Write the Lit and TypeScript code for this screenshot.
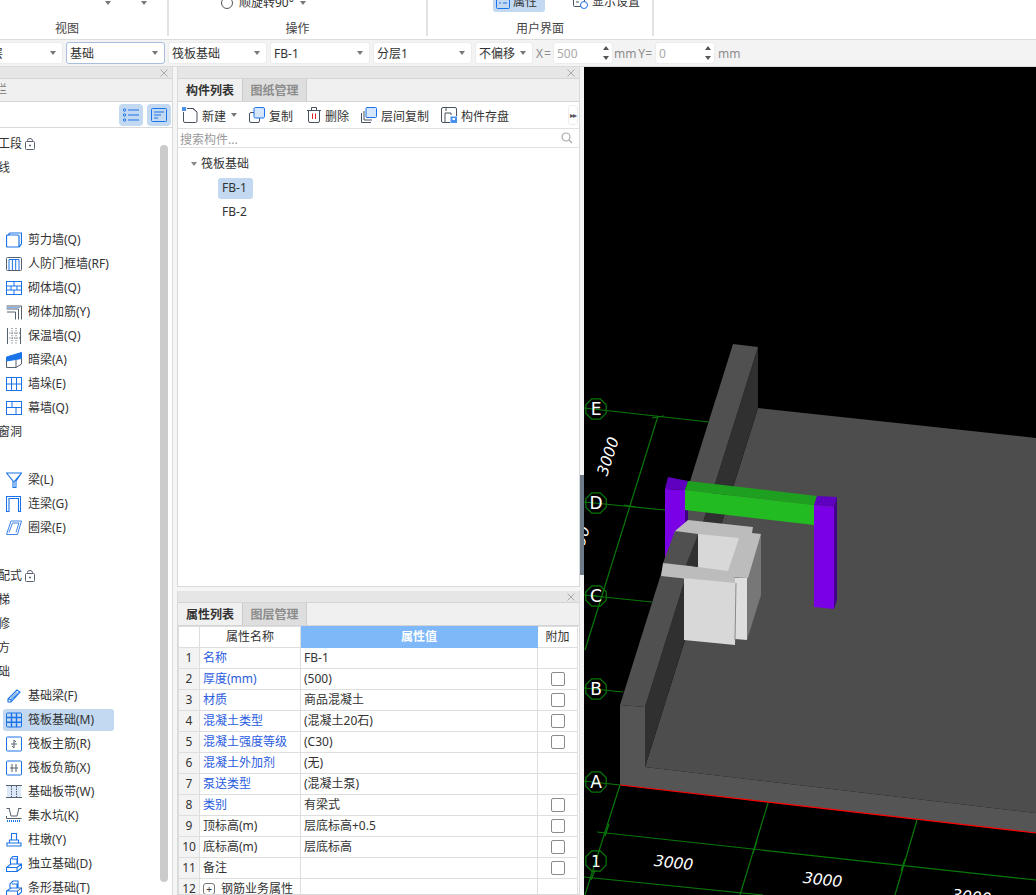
import { LitElement, html, css, svg } from "lit";
import { customElement } from "lit/decorators.js";

const B = "#1a73e8";
const D = "#56606e";
const ic = (body: unknown, w = 16, h = 16) =>
  html`<svg class="ico" width=${w} height=${h} viewBox="0 0 16 16" fill="none" stroke=${B} stroke-width="1">${body}</svg>`;

const icons: Record<string, unknown> = {
  shear: ic(svg`<rect x=".5" y="3" width="12.5" height="12" rx="1" stroke-width="1.2"/><path d="M2 3 4 1H15.5V12L13 15" stroke-width="1.2"/>`),
  door: ic(svg`<rect x=".5" y="1.5" width="15" height="13" rx="1" stroke=${D}/><path d="M3 3.5H13V14M3 3.5V14M6.4 3.5V14M9.7 3.5V14" stroke=${B}/>`),
  brick: ic(svg`<rect x=".5" y="1.5" width="15" height="13"/><path d="M.5 6H15.5M.5 10H15.5M8 1.5V6M5 6V10M11 6V10M8 10V14.5"/>`),
  rebar: ic(svg`<path d="M.5 2H15.5V15.5M.5 5H12.5V15.5" stroke=${D}/><path d="M1 8H9.5V15.5" stroke=${D}/><path d="M.5 3.5H14" stroke=${B} stroke-opacity=".55"/>`),
  insul: ic(svg`<path d="M1.5 0V16M14.5 0V16" stroke=${D}/><path d="M6 0V16M10 0V16M1 5H15M1 10H15" stroke=${D} stroke-dasharray="1 1.4"/>`),
  hidden: ic(svg`<path d="M.5 5 15.5 .5V6.5L.5 9Z" fill=${B} stroke=${B}/><path d="M.5 9V15.5H10L15.5 12V6.5M10 8V15.5" stroke=${D}/>`),
  pier: ic(svg`<rect x=".5" y="1.5" width="15" height="13"/><path d="M.5 8H15.5M5.5 1.5V14.5M10.5 1.5V14.5"/>`),
  curtain: ic(svg`<rect x=".5" y="1.5" width="15" height="13"/><path d="M.5 7.5H15.5M6 1.5V7.5M10 7.5V14.5"/>`),
  beam: ic(svg`<path d="M.5 1H15.5L10 9V15.5H7V9ZM15.5 1 7 11" stroke="#1a73e8" stroke-width="1.1"/><path d="M8.5 10V15" stroke="#8dbbf2" stroke-width="2"/>`),
  lintel: ic(svg`<path d="M.5 15.5V.5H14.5V15.5H12.5V2.5H3V15.5Z" stroke-width="1.1"/>`),
  ring: ic(svg`<path d="M.5 14.5 5 1H15.5L11.5 14.5ZM3 12.5 6.5 3H13L10 12.5" stroke="#3d85e8"/>`),
  fbeam: ic(svg`<path d="M2 11 11 2 14 4 5 14 2 14ZM2 11 5 11.5 5 14M5 11.5 14 4" stroke-width="1.1"/><path d="M5 10.5 11.5 4.5" stroke="#8dbbf2" stroke-width="2"/>`),
  raft: ic(svg`<rect x=".5" y="1" width="15" height="14" rx="1"/><path d="M.5 5.5H15.5M.5 10.3H15.5M5.5 1V15M10.5 1V15" stroke-width="1.4"/>`),
  main: ic(svg`<rect x=".5" y="1" width="15" height="14" rx="1"/><path d="M8 4V12M5 8H11M8 4 10 6M8 12 6 10" stroke=${D}/>`),
  neg: ic(svg`<rect x=".5" y="1" width="15" height="14" rx="1"/><path d="M6 4V12M10 4V12M4 8H12" stroke=${D}/>`),
  strip: ic(svg`<rect x="1" y="2" width="14" height="12" fill="#dbe9fa" stroke="none"/><path d="M0 1.5H16M0 13.5H16" stroke=${D}/><path d="M5.5 2V13M10.5 2V13" stroke=${D} stroke-dasharray="1.5 1"/>`),
  pit: ic(svg`<path d="M3 0 5 8H11L13 0M.5 .5H3.5M12.5 .5H15.5M.5 8 .5 10.5H15.5" stroke=${D}/><path d="M1 13H15" stroke=${B} stroke-width="2" stroke-dasharray="1 1"/>`),
  cap: ic(svg`<path d="M5.5 1.5H10.5V8H5.5ZM3.5 8H12.5V11H3.5ZM1 11H15V14H1Z" stroke-width="1.1"/>`),
  iso: ic(svg`<path d="M.5 15.5V11.5L5 8H15.5V12L11 15.5ZM.5 11.5H11V15.5M11 11.5 15.5 8M4.5 8V3L7 .5H11.5V8M6 3H11V8" stroke-width="1.1"/>`),
  bar: ic(svg`<path d="M.5 15.5V11L5 8H15.5V12L11.5 15.5ZM.5 11H11.5V15.5M4 8V4L7 1H12V8M6 4H11V8" stroke-width="1.1"/><path d="M11.5 11 15.5 8" stroke=${D}/>`),
};

const tree: Array<{ t: string; i?: string; lock?: boolean; on?: boolean }> = [
  { t: "施工段", lock: true }, { t: "轴线" }, { t: "柱" }, { t: "墙" },
  { t: "剪力墙(Q)", i: "shear" }, { t: "人防门框墙(RF)", i: "door" }, { t: "砌体墙(Q)", i: "brick" },
  { t: "砌体加筋(Y)", i: "rebar" }, { t: "保温墙(Q)", i: "insul" }, { t: "暗梁(A)", i: "hidden" },
  { t: "墙垛(E)", i: "pier" }, { t: "幕墙(Q)", i: "curtain" }, { t: "门窗洞" }, { t: "梁" },
  { t: "梁(L)", i: "beam" }, { t: "连梁(G)", i: "lintel" }, { t: "圈梁(E)", i: "ring" }, { t: "板" },
  { t: "装配式", lock: true }, { t: "楼梯" }, { t: "装修" }, { t: "土方" }, { t: "基础" },
  { t: "基础梁(F)", i: "fbeam" }, { t: "筏板基础(M)", i: "raft", on: true }, { t: "筏板主筋(R)", i: "main" },
  { t: "筏板负筋(X)", i: "neg" }, { t: "基础板带(W)", i: "strip" }, { t: "集水坑(K)", i: "pit" },
  { t: "柱墩(Y)", i: "cap" }, { t: "独立基础(D)", i: "iso" }, { t: "条形基础(T)", i: "bar" },
];

const rows: Array<[string, string, boolean, boolean]> = [
  ["名称", "FB-1", true, false], ["厚度(mm)", "(500)", true, true], ["材质", "商品混凝土", true, true],
  ["混凝土类型", "(混凝土20石)", true, true], ["混凝土强度等级", "(C30)", true, true], ["混凝土外加剂", "(无)", true, false],
  ["泵送类型", "(混凝土泵)", true, false], ["类别", "有梁式", true, true], ["顶标高(m)", "层底标高+0.5", false, true],
  ["底标高(m)", "层底标高", false, true], ["备注", "", false, true],
];

const lock = html`<svg class="lock" width="10" height="12" viewBox="0 0 10 12" fill="none" stroke="#56606e"><rect x=".5" y="3.5" width="9" height="8" rx="1"/><path d="M2.5 3.5V2.5a2.5 2 0 0 1 5 0v1"/><circle cx="5" cy="7.5" r="1" fill="#56606e" stroke="none"/></svg>`;

const close = html`<svg width="8" height="8" viewBox="0 0 8 8" stroke="#aaa" stroke-width="1"><path d="M.5.5 7.5 7.5M7.5.5.5 7.5"/></svg>`;

const tbIcons = {
  add: html`<svg width="16" height="16" viewBox="0 0 16 16" fill="none" stroke="#4a5260"><path d="M5 1.5H11L15 5V14a1.5 1.5 0 0 1-1.5 1.5H3A1.5 1.5 0 0 1 1.5 14V5"/><path d="M11 1.5 15 5"/><rect x="0" y="0" width="4" height="4" fill="#4a90ee" stroke="none"/></svg>`,
  copy: html`<svg width="16" height="16" viewBox="0 0 16 16" fill="none"><path d="M5 5.5H2A1.5 1.5 0 0 0 .5 7V14A1.5 1.5 0 0 0 2 15.5H9A1.5 1.5 0 0 0 10.5 14V11" stroke="#4a5260"/><rect x="5" y=".5" width="10.5" height="10.5" rx="1.5" fill="#d5e6fb" stroke="#1a73e8"/></svg>`,
  del: html`<svg width="14" height="16" viewBox="0 0 14 16" fill="none" stroke="#4a5260"><path d="M1.5 3.5V14a1.5 1.5 0 0 0 1.5 1.5H11a1.5 1.5 0 0 0 1.5-1.5V3.5M0 3.5H14M4.5 3V.5H9.5V3"/><path d="M5.5 6.5V12M8.5 6.5V12" stroke="#e02020"/></svg>`,
  floor: html`<svg width="16" height="16" viewBox="0 0 16 16" fill="none"><path d="M.5 6V15.5H10M3 4V13H11" stroke="#4a5260"/><rect x="5" y=".5" width="10.5" height="10" rx="1" fill="#d5e6fb" stroke="#1a73e8"/></svg>`,
  save: html`<svg width="16" height="16" viewBox="0 0 16 16" fill="none"><path d="M9 15.5H2a1.5 1.5 0 0 1-1.5-1.5V2A1.5 1.5 0 0 1 2 .5H14A1.5 1.5 0 0 1 15.5 2V9M4 15V6H10V8M5 1V4" stroke="#4a5260"/><rect x="9.5" y="9.5" width="6.5" height="6.5" fill="#4a90ee"/><rect x="11.5" y="11" width="2.5" height="2" fill="#fff"/></svg>`,
};

function octagon(cx: number, cy: number, r: number) {
  const p: string[] = [];
  for (let i = 0; i < 8; i++) {
    const a = Math.PI / 8 + (i * Math.PI) / 4;
    p.push(`${(cx + r * Math.cos(a)).toFixed(1)},${(cy + r * Math.sin(a)).toFixed(1)}`);
  }
  return p.join(" ");
}

const tick = (x: number, y: number, dx: number, dy: number) =>
  svg`<path d="M${x - dx} ${y - dy}L${x + dx} ${y + dy}"/>`;

@customElement("app-root")
export class AppRoot extends LitElement {
  static styles = css`
    :host { display: block; width: 1036px; height: 895px; overflow: hidden; background: #f5f5f5;
      font: 12px/16px "Noto Sans", "Noto Sans CJK SC", sans-serif; color: #333; }
    .ribbon { height: 40px; background: #fff; display: flex; overflow: hidden; border-bottom: 1px solid #dcdcdc; box-sizing: border-box; }
    .grp { border-right: 2px solid #e2e2e2; height: 36px; box-sizing: border-box; display: flex; flex-direction: column; align-items: center; }
    .grp .top { height: 21px; display: flex; align-items: center; width: 100%; position: relative; flex: none; box-sizing: border-box; }
    .grp .lbl { line-height: 16px; color: #444; }
    .g1 { width: 169px; } .g2 { width: 259px; } .g3 { width: 226px; }
    .caret { width: 0; height: 0; border: 3px solid transparent; border-top: 4px solid #777; border-bottom: 0; flex: none; }
    .g1 .top { padding-left: 105px; gap: 30px; margin-top: -8px; }
    .g1 .lbl { margin-top: 8px; margin-right: 33px; }
    .g2 .top { padding-left: 52px; margin-top: -8px; }
    .g2 .lbl { margin-top: 8px; }
    .radio { width: 10px; height: 10px; border: 1px solid #555; border-radius: 50%; flex: none; margin-right: 6px; }
    .g2 .caret { margin-left: 6px; }
    .g3 .top { padding-left: 65px; margin-top: -9px; }
    .g3 .lbl { margin-top: 9px; }
    .prop { display: flex; align-items: center; gap: 3px; background: #c2d9f1; border-radius: 3px; height: 21px; width: 52px; padding: 0 3px; box-sizing: border-box; flex: none; }
    .disp { display: flex; align-items: center; gap: 4px; margin-left: 28px; flex: none; }
    .bar { height: 27px; display: flex; align-items: center; background: #f3f3f3; border-bottom: 1px solid #dcdcdc; box-sizing: border-box; margin-left: -37px; gap: 3px; }
    .sel { height: 22px; background: #fff; border: 1px solid #ececec; border-radius: 3px; box-sizing: border-box; display: flex; align-items: center; justify-content: space-between; padding: 0 6px 0 3px; flex: none; }
    .sel.on { border-color: #a9bde0; }
    .txt { padding-top: 2px; }
    .num { height: 22px; background: #fff; border: 1px solid #ececec; border-radius: 3px; box-sizing: border-box; display: flex; align-items: center; justify-content: space-between; padding: 0 3px; flex: none; color: #aaa; width: 60px; }
    .spin { display: flex; flex-direction: column; gap: 6px; }
    .up { width: 0; height: 0; border: 3px solid transparent; border-bottom: 4px solid #555; border-top: 0; }
    .dn { width: 0; height: 0; border: 3px solid transparent; border-top: 4px solid #555; border-bottom: 0; }
    .unit { color: #8b8b8b; flex: none; padding-top: 2px; }
    .unit.x { letter-spacing: 1px; margin-right: -2px; }
    .unit.m1 { margin-left: -2px; }
    .unit.y { margin-left: -1px; }
    .main { display: flex; height: 828px; }
    .left { width: 173px; flex: none; background: #fff; display: flex; flex-direction: column; overflow: hidden; border-right: 1px solid #d9d9d9; box-sizing: border-box; }
    .title { height: 11px; flex: none; background: #e6e6e6; border-bottom: 1px solid #d4d4d4; display: flex; justify-content: flex-end; align-items: center; padding-right: 4px; }
    .tabs { height: 22px; flex: none; background: #f0f0f0; border-bottom: 1px solid #d4d4d4; display: flex; align-items: stretch; font-weight: 700; }
    .tab { width: 64px; display: flex; align-items: center; justify-content: center; color: #333; padding-top: 2px; box-sizing: border-box; }
    .tab.off { width: 65px; background: #dedede; color: #8c8c8c; border-left: 1px solid #ccc; border-right: 1px solid #ccc; }
    .navt { margin-left: -29px; align-items: center; display: flex; color: #777; font-weight: 400; }
    .ltools { height: 26px; flex: none; border-bottom: 1px solid #d9d9d9; display: flex; justify-content: flex-end; align-items: center; gap: 4px; padding-right: 1px; box-sizing: border-box; }
    .ltools span { width: 24px; height: 22px; border-radius: 4px; background: #c2d9f1; display: flex; align-items: center; justify-content: center; }
    .lbody { flex: 1; display: flex; min-height: 0; }
    .tree { flex: 1; padding-top: 4px; min-width: 0; overflow: hidden; display: flex; flex-direction: column; }
    .row { height: 24px; flex: none; display: flex; align-items: center; white-space: nowrap; }
    .row.group { margin-left: -14px; gap: 3px; }
    .row.item { margin: 1px 0 1px 3px; padding-left: 3px; width: 111px; height: 22px; box-sizing: border-box; border-radius: 3px; gap: 6px; }
    .row.active { background: #c2d9f1; }
    .ico { flex: none; display: block; }
    .lock { flex: none; }
    .track { width: 12px; flex: none; }
    .thumb { width: 8px; height: 737px; margin-top: 17px; background: #cbcbcb; border-radius: 4px; }
    .mid { width: 403px; margin-left: 4px; flex: none; display: flex; flex-direction: column; gap: 4px; }
    .panel { background: #fff; border: 1px solid #d9d9d9; border-top: 0; display: flex; flex-direction: column; box-sizing: border-box; overflow: hidden; }
    .p1 { height: 520px; flex: none; }
    .p2 { flex: 1; min-height: 0; }
    .mtools { height: 27px; flex: none; border-bottom: 1px solid #e0e0e0; display: flex; align-items: center; padding-left: 4px; position: relative; box-sizing: border-box; }
    .tb { display: flex; align-items: center; gap: 4px; flex: none; }
    .tb svg { display: block; }
    .tb span { padding-top: 3px; }
    .more { position: absolute; right: 1px; top: 3px; width: 10px; height: 20px; border: 1px solid #eee; border-radius: 3px; box-sizing: border-box; display: flex; align-items: center; justify-content: center; font-size: 8px; color: #555; letter-spacing: -1px; }
    .search { height: 19px; flex: none; border-bottom: 1px solid #e0e0e0; display: flex; align-items: center; justify-content: space-between; padding: 0 6px 0 2px; color: #9a9a9a; box-sizing: border-box; }
    .search span { padding-top: 4px; }
    .list { padding-top: 4px; }
    .node { height: 24px; display: flex; align-items: center; padding-left: 13px; gap: 4px; }
    .node .caret { border-top-color: #888; }
    .leaf { height: 24px; display: flex; align-items: center; padding-left: 40px; }
    .leaf span { height: 21px; padding: 0 4px; display: flex; align-items: center; border-radius: 3px; width: 35px; box-sizing: border-box; }
    .leaf span.on { background: #c2d9f1; }
    table { border-collapse: collapse; table-layout: fixed; width: 399px; }
    td, th { height: 21px; padding: 0 0 0 3px; border: 1px solid #dedede; box-sizing: border-box; font-weight: 400; text-align: left; white-space: nowrap; overflow: hidden; }
    th { text-align: center; padding: 0; background: #fff; }
    th.v { background: #7eb8f8; color: #fff; font-weight: 700; border-color: #7eb8f8; }
    td.n { background: #f3f3f3; text-align: center; padding: 0; }
    td.b { color: #2a5ce0; }
    td.c { text-align: center; padding: 0; }
    .cb { display: block; width: 14px; height: 14px; border: 1px solid #8a8a8a; border-radius: 2px; box-sizing: border-box; margin: auto; }
    .plus { display: inline-flex; width: 12px; height: 12px; border: 1px solid #777; border-radius: 3px; box-sizing: border-box; align-items: center; justify-content: center; margin: -2px 6px 0 0; vertical-align: middle; font-size: 10px; line-height: 10px; }
    .gutter { width: 4px; flex: none; }
    .handle { width: 4px; height: 100px; margin-top: 408px; background: #6d7a88; }
    .canvas { flex: 1; min-width: 0; background: #000; }
    .canvas svg { display: block; }
    .canvas text { font-family: "DejaVu Sans", sans-serif; fill: #fff; }
  `;

  private paint() {
    return svg`
      <polygon points="758,408 1036,438 1036,813 645,767" fill="#4d4d4d"/>
      <polygon points="758,347 758,408 645,767 645,707" fill="#303030"/>
      <polygon points="733,344 758,347 645,707 620,705" fill="#505050"/>
      <polygon points="620,705 645,707 645,767 1036,813 1036,833 620,785" fill="#555"/>
      <path d="M620 785 1036 833" stroke="#f00" stroke-width="1.2"/>
      <g stroke="#087808" stroke-width="1.2" fill="none">
        <path d="M584 408 709 422M584 502 665 510M584 595 652 602M584 688 623 692M584 781 620 785"/>
        <path d="M658 416 585 650"/>
        <path d="M620 785 585 895M768 803 740 895M917 820 895 895"/>
        <path d="M597 832 1036 880M584 877 763 895"/>
        ${tick(658, 417, 6, -1)}${tick(630, 506, 6, 1)}${tick(597, 596, 6, 1)}
        ${tick(607, 830, 2, -6)}${tick(755, 847, 2, -6)}${tick(903, 865, 2, -6)}${tick(593, 875, 2, -5)}
        ${[409, 503, 596, 689, 782, 861].map((y) => svg`<polygon points=${octagon(596, y, 11)}/>`)}
      </g>
      <polygon points="668,477 688,481 685,490 665,489" fill="#5f00c0"/>
      <polygon points="665,489 685,490 685,565 665,565" fill="#7a00e6"/>
      <polygon points="688,481 688,520 685,530 685,490" fill="#3f0080"/>
      <polygon points="688,481 817,496 814,505 685,490" fill="#1f9f1f"/>
      <polygon points="685,490 814,505 814,525 685,510" fill="#22bb22"/>
      <polygon points="817,496 837,497 834,507 814,505" fill="#5f00c0"/>
      <polygon points="814,505 834,507 834,609 814,607" fill="#7a00e6"/>
      <polygon points="837,497 837,600 834,609 834,507" fill="#42008a"/>
      <polygon points="761,534 761,595 747,640 747,578" fill="#777"/>
      <polygon points="688,520 753,527 752,533 761,534 748,578 662,575 675,531" fill="#bcbcbc"/>
      <polygon points="698,534 739,538 728,571 698,567" fill="#d8d8d8"/>
      <polygon points="675,531 698,534 698,567 663,563" fill="#505050"/>
      <polygon points="698,534 698,567 686,565" fill="#303030"/>
      <polygon points="663,563 737,578 735,584 661,576" fill="#bcbcbc"/>
      <polygon points="684,578 736,583 735,645 684,640" fill="#d8d8d8"/>
      <polygon points="735,578 747,578 747,640 735,639" fill="#dedede"/>
      <path d="M736 583 735 640" stroke="#888"/>
      <text x="596" y="415" text-anchor="middle" font-size="17">E</text>
      <text x="596" y="509" text-anchor="middle" font-size="17">D</text>
      <text x="596" y="602" text-anchor="middle" font-size="17">C</text>
      <text x="596" y="695" text-anchor="middle" font-size="17">B</text>
      <text x="596" y="788" text-anchor="middle" font-size="17">A</text>
      <text x="596" y="867" text-anchor="middle" font-size="15">1</text>
      <text font-size="15.5" font-style="italic" text-anchor="middle" transform="translate(613 458) rotate(-72)">3000</text>
      <text font-size="15.5" font-style="italic" text-anchor="middle" transform="translate(673 868) rotate(6.5)">3000</text>
      <text font-size="15.5" font-style="italic" text-anchor="middle" transform="translate(822 885) rotate(6.5)">3000</text>
      <text font-size="15.5" font-style="italic" text-anchor="middle" transform="translate(971 902) rotate(6.5)">3000</text>
      <text font-size="15.5" font-style="italic" text-anchor="middle" transform="translate(584 547) rotate(-72)">3000</text>
    `;
  }

  render() {
    return html`
      <div class="ribbon">
        <div class="grp g1"><div class="top"><i class="caret"></i><i class="caret"></i></div><div class="lbl">视图</div></div>
        <div class="grp g2"><div class="top"><i class="radio"></i><span>顺旋转90°</span><i class="caret"></i></div><div class="lbl">操作</div></div>
        <div class="grp g3"><div class="top">
            <span class="prop"><svg width="14" height="14" viewBox="0 0 14 14" fill="none" stroke="#1a73e8"><rect x=".5" y=".5" width="13" height="13" rx="1"/><path d="M3 4H5M7 4H11M3 8H5M7 8H11"/></svg>属性</span>
            <span class="disp"><svg width="15" height="14" viewBox="0 0 15 14" fill="none" stroke="#4a5260"><rect x=".5" y=".5" width="11" height="11" rx="1"/><path d="M3 4H9M3 7H6"/><circle cx="11" cy="10" r="3.5" fill="#fff" stroke="#1a73e8"/></svg>显示设置</span>
          </div><div class="lbl">用户界面</div></div>
      </div>
      <div class="bar">
        <span class="sel" style="width:100px"><span class="txt">基础层</span><i class="caret"></i></span>
        <span class="sel on" style="width:99px"><span class="txt">基础</span><i class="caret"></i></span>
        <span class="sel" style="width:99px"><span class="txt">筏板基础</span><i class="caret"></i></span>
        <span class="sel" style="width:100px"><span class="txt">FB-1</span><i class="caret"></i></span>
        <span class="sel" style="width:99px"><span class="txt">分层1</span><i class="caret"></i></span>
        <span class="sel" style="width:58px"><span class="txt">不偏移</span><i class="caret"></i></span>
        <span class="unit x">X=</span>
        <span class="num"><span class="txt">500</span><span class="spin"><i class="up"></i><i class="dn"></i></span></span>
        <span class="unit m1">mm</span><span class="unit y">Y=</span>
        <span class="num"><span class="txt">0</span><span class="spin"><i class="up"></i><i class="dn"></i></span></span>
        <span class="unit">mm</span>
      </div>
      <div class="main">
        <div class="left">
          <div class="title">${close}</div>
          <div class="tabs"><span class="navt">导航栏</span></div>
          <div class="ltools">
            <span><svg width="16" height="14" viewBox="0 0 16 14" fill="none" stroke="#1a73e8"><circle cx="1.5" cy="2" r="1.2"/><circle cx="1.5" cy="7" r="1.2"/><circle cx="1.5" cy="12" r="1.2"/><path d="M5 2H16M5 7H16M5 12H16"/></svg></span>
            <span><svg width="16" height="14" viewBox="0 0 16 14" fill="none" stroke="#1a73e8"><rect x=".5" y=".5" width="15" height="13" rx="1"/><path d="M3 4H13M3 7H10M3 10H7"/></svg></span>
          </div>
          <div class="lbody">
            <div class="tree">
              ${tree.map((r) =>
                r.i
                  ? html`<div class="row item ${r.on ? "active" : ""}">${icons[r.i]}<span>${r.t}</span></div>`
                  : html`<div class="row group"><span>${r.t}</span>${r.lock ? lock : ""}</div>`
              )}
            </div>
            <div class="track"><div class="thumb"></div></div>
          </div>
        </div>
        <div class="mid">
          <div class="panel p1">
            <div class="title">${close}</div>
            <div class="tabs"><span class="tab">构件列表</span><span class="tab off">图纸管理</span></div>
            <div class="mtools">
              <span class="tb">${tbIcons.add}<span>新建</span></span><i class="caret" style="margin:0 12px 0 5px"></i>
              <span class="tb" style="margin-right:14px">${tbIcons.copy}<span>复制</span></span>
              <span class="tb" style="margin-right:12px">${tbIcons.del}<span>删除</span></span>
              <span class="tb" style="margin-right:12px">${tbIcons.floor}<span>层间复制</span></span>
              <span class="tb">${tbIcons.save}<span>构件存盘</span></span>
              <span class="more">▸▸</span>
            </div>
            <div class="search"><span>搜索构件...</span>
              <svg width="12" height="12" viewBox="0 0 12 12" fill="none" stroke="#aaa" stroke-width="1.2"><circle cx="5" cy="5" r="4"/><path d="M8 8 11 11"/></svg></div>
            <div class="list">
              <div class="node"><i class="caret"></i><span>筏板基础</span></div>
              <div class="leaf"><span class="on">FB-1</span></div>
              <div class="leaf"><span>FB-2</span></div>
            </div>
          </div>
          <div class="panel p2">
            <div class="title">${close}</div>
            <div class="tabs"><span class="tab">属性列表</span><span class="tab off">图层管理</span></div>
            <table>
              <colgroup><col style="width:21px"/><col style="width:101px"/><col style="width:237px"/><col style="width:40px"/></colgroup>
              <tr><th></th><th>属性名称</th><th class="v">属性值</th><th>附加</th></tr>
              ${rows.map((r, i) => html`<tr>
                <td class="n">${i + 1}</td><td class=${r[2] ? "b" : ""}>${r[0]}</td><td>${r[1]}</td>
                <td class="c">${r[3] ? html`<i class="cb"></i>` : ""}</td></tr>`)}
              <tr><td class="n">12</td><td><span class="plus">+</span>钢筋业务属性</td><td></td><td></td></tr>
            </table>
          </div>
        </div>
        <div class="gutter"><div class="handle"></div></div>
        <div class="canvas">
          <svg width="452" height="828" viewBox="584 67 452 828">${this.paint()}</svg>
        </div>
      </div>
    `;
  }
}
